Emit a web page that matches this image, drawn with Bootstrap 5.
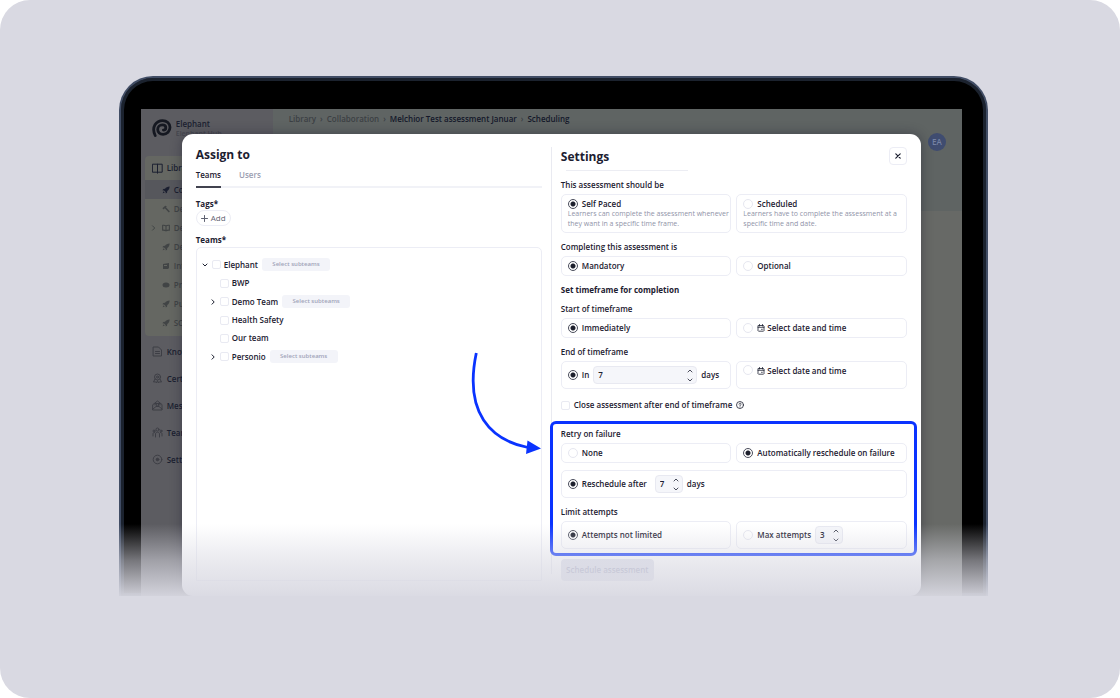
<!DOCTYPE html>
<html lang="en">
<head>
<meta charset="utf-8">
<meta name="viewport" content="width=device-width, initial-scale=1">
<title>Assign to – Scheduling</title>
<link href="https://cdn.jsdelivr.net/npm/bootstrap@5.3.0/dist/css/bootstrap.min.css" rel="stylesheet">
<style>
:root{--stage:#d9d9e2;--ink:#1c2030;--line:#ecedf5;--blue:#0a33ff}
body{font-family:"Open Sans","Noto Sans",sans-serif;font-size:8px;line-height:12px;font-weight:560;color:var(--ink);background:#fff}
button,input{font:inherit;color:inherit}
svg{display:block;flex:none}
.ln{fill:none;stroke:currentColor;stroke-linecap:round;stroke-linejoin:round}
.stage{min-height:100vh;background:var(--stage);border-radius:30px;padding:76px 11.8% 100px 10.6%}
.device{border:2px solid #414d65;border-bottom:0;border-radius:34px 34px 0 0;box-shadow:inset 0 0 0 3px #1b222e;background:#000;padding:31px 24px 0 20px}
.fade-out{left:-3px;right:-3px;bottom:-1px;height:73px;background:linear-gradient(rgba(217,217,226,0),rgba(217,217,226,.55) 50%,rgba(217,217,226,.96));z-index:5}

/* dimmed application behind the dialog */
.app{background:#676966;color:#1b1f30}
.side{width:132px;background:#5c5c61}
.topbar{height:102px;background:#5f6463;padding:4px 16px;color:#3c4044}
.topbar .here{color:#14182a}
.brand{padding:9px 11px 0;height:47px;font-weight:600}
.brand small{font-size:7px;line-height:8px;color:#45464e}
.menu-card{margin:0 0 0 4px;background:#656762;border-radius:4px 0 0 4px;height:180px}
.menu-head{height:24px;padding-left:7px;font-weight:600}
.menu-sub{height:19px;padding-left:17px;color:#414445}
.menu-sub.on{background:#56575c;color:#1b1f30}
.menu-main{height:27px;padding-left:11px;font-weight:600}
.menu-list{padding-top:2px}
.menu-main svg{color:#3d3e45}
.avatar{width:18px;height:18px;border-radius:50%;background:#3f4c70;color:#7481a3;right:16px;top:24px}

/* dialog */
.dialog{margin:0 41px 25px;top:25px;background:#fff;border-radius:11px;padding:13px 14px 15px;box-shadow:0 0 12px rgba(20,20,40,.4);display:grid;grid-template-columns:minmax(0,1fr) 1px minmax(0,1fr);column-gap:9px}
.divider{background:#e9eaf1;margin-bottom:7px}
h1,h2{font-size:12px;line-height:16px;font-weight:700;margin:0}
h3,.lbl{font-size:8px;line-height:12px;margin:0;font-weight:560;display:block}
h3,.lbl.strong{font-weight:700}
.tabs{border-bottom:2px solid #f1f2f7;height:25px;gap:18px}
.tabs button{border:0;background:none;padding:0 0 2px;color:#9a9db0;margin-bottom:-2px;border-bottom:2px solid transparent;line-height:12px;font-weight:600}
.tabs button.on{color:var(--ink);border-color:#41434f}
.tags-label{padding-top:10px}
.teams-label{padding:8px 0 1px}
.add{border:1px solid var(--line);border-radius:8px;background:#fff;height:16px;padding:0 4px;color:#5f6272;gap:3px;font-weight:500}
.tree{border:1px solid var(--line);border-radius:5px 5px 0 0;padding:7px 5px}
.tree ul{list-style:none;padding:0 0 0 8px;margin:0}
.node{height:18px}
.node.parent{height:19px}
.node .twist{width:8px;height:12px;border:0;background:none;padding:0;margin-right:2px}
.node label{margin:0 4px 0 3px}
.subt{border:0;border-radius:3px;background:#f3f4f9;color:#a0a3b8;font-size:6px;line-height:13px;height:13px;width:68px;padding:0}
.tick{appearance:none;width:9px;height:9px;border:1px solid #e9eaf2;border-radius:2px;margin:0;background:#fff;flex:none}
.dot{appearance:none;width:10px;height:10px;border:1px solid #e6e7f0;border-radius:50%;margin:0;background:#fff;flex:none}
.dot:checked{border-color:#4a4d5b;background:radial-gradient(circle,#1d202d 0 2px,#fff 3px)}
.pair{display:grid;grid-template-columns:1fr 1fr;gap:5px}
.opt{border:1px solid var(--line);border-radius:5px;padding:0 6px;min-height:20px;display:flex;align-items:center;gap:4px;background:#fff}
.opt.tall{min-height:28px}
.opt.top-line{align-items:flex-start;padding-top:3px}
.opt.rich{display:block;height:39px;padding:3px 6px}
.opt p{font-size:7px;line-height:10px;color:#9093a8;font-weight:400;margin:-1px -6px 0 0}
.sect{padding-top:8px}
.sect.near{padding-top:7px}
.sect>.lbl{margin-bottom:3px}
.close-row{padding-top:10px}
.close-btn{width:18px;height:18px;border:1px solid var(--line);border-radius:4px;background:#fff;padding:0}
.short-rule{width:122px;margin:5px 0 0 5px;height:1px;background:#ecedf3}
.dated{gap:2px}
.num{height:18px;border:1px solid #e8e9f1;border-radius:4px;background:#f5f6fa;display:flex;align-items:center;padding:0 3px 0 4px;width:28px}
.num.wide{width:104px}
.num input{appearance:textfield;border:0;background:none;padding:0;width:0;flex:1;outline:0;height:12px;margin-bottom:1px}
.num input::-webkit-inner-spin-button{appearance:none}
.num button{display:block;border:0;background:none;padding:0;width:6px;height:6px;color:#4b4e5c}
.num button+button{margin-top:3px}
.callout-box{border:3px solid var(--blue);border-radius:6px;margin:10px -10px 0 -11px;padding:4px 7px 4px 8px}
.callout-box .lbl{margin-bottom:3px}
.reschedule{margin-top:7px}
.send{height:22px;width:93px;border:0;border-radius:4px;background:#dfe1ec;color:#a9acc4;padding:0;font-weight:600;margin-top:3px}
.pointer{right:0;top:203px;color:var(--blue);z-index:3}
</style>
</head>
<body>
<svg class="d-none" aria-hidden="true">
<symbol id="rocket" viewBox="0 0 10 10"><path fill="currentColor" d="M9.500.5C6.700.6 5 1.600 3.800 3.400L1.700 3.700.5 5.300l2 .2 2 2 .2 2L6.300 8.300l.3-2.100C8.400 5 9.400 3.300 9.500.5zM2 6.500.8 9.200l2.700-1.200z"/></symbol>
<symbol id="hammer" viewBox="0 0 10 10"><path fill="currentColor" d="M.5 4 4 .8l2 .7-1 1.200L9.800 8.200 8.500 9.500 3.500 4.200l-1.300 1.300z"/></symbol>
<symbol id="book" viewBox="0 0 10 10"><path class="ln" stroke-width="1.400" d="M5 2.500v6M5 2.500C4 1.700 2.500 1.500.8 1.700v6C2.500 7.600 4 7.700 5 8.500c1-.8 2.500-.9 4.200-.8v-6C7.500 1.500 6 1.700 5 2.500z"/></symbol>
<symbol id="up" viewBox="0 0 6 6"><path class="ln" d="M1 4l2-2 2 2"/></symbol>
<symbol id="down" viewBox="0 0 6 6"><path class="ln" d="M1 2l2 2 2-2"/></symbol>
<symbol id="right" viewBox="0 0 6 6"><path class="ln" d="M2 .8 4.200 3 2 5.200"/></symbol>
<symbol id="cal" viewBox="0 0 8 8"><path class="ln" stroke-width=".8" d="M1.500 1.500h5l.5.500v4.700l-.5.500h-5L1 6.700V2zM1 3.300h6M2.500.5v1.500M5.500.5v1.500M4.500 5.300h.8"/></symbol>
</svg>

<main class="stage">
<div class="device position-relative">
<div class="position-relative overflow-hidden">

<div class="app d-flex position-absolute top-0 start-0 w-100 h-100 overflow-hidden">
  <nav class="side flex-shrink-0" aria-label="Main">
    <div class="brand d-flex gap-1">
      <svg width="20" height="20" viewBox="0 0 20 20" class="ln" style="color:#151821"><path stroke-width="2.800" d="M3.200 17.500C1.500 14 1.200 9.800 3 6.800 4.700 4 7.600 2.600 10.600 2.600c4.200 0 7.400 2.800 7.400 6.700s-2.900 7-6.900 7c-3.300 0-5.400-2-5.400-4.700 0-2.800 2-4.700 4.500-4.700 2.100 0 3.600 1.200 3.600 2.800s-1.100 2.400-2.400 2.400"/></svg>
      <div><div>Elephant</div><small class="d-block">Elephant Hub</small></div>
    </div>
    <div class="menu-card">
      <div class="menu-head d-flex align-items-center gap-1"><svg width="11" height="11" viewBox="0 0 11 11" class="ln"><path d="M.8 1.200h9.400v8H.8zM5.500 1.200v9"/></svg>Library</div>
      <div class="menu-sub on d-flex align-items-center gap-1"><svg width="8" height="8"><use href="#rocket"/></svg>Co</div>
      <div class="menu-sub d-flex align-items-center gap-1"><svg width="8" height="8"><use href="#hammer"/></svg>De</div>
      <div class="menu-sub d-flex align-items-center gap-1 ps-1"><svg width="9" height="6"><use href="#right"/></svg><svg width="8" height="8"><use href="#book"/></svg>De</div>
      <div class="menu-sub d-flex align-items-center gap-1"><svg width="8" height="8"><use href="#rocket"/></svg>De</div>
      <div class="menu-sub d-flex align-items-center gap-1"><svg width="8" height="8" viewBox="0 0 8 8"><path fill="currentColor" d="M1 2 7 1v5L6 7H1zM2 3v1h3V3z" fill-rule="evenodd"/></svg>Int</div>
      <div class="menu-sub d-flex align-items-center gap-1"><svg width="8" height="8" viewBox="0 0 8 8"><ellipse cx="4" cy="4" rx="3.500" ry="2.500" fill="currentColor"/></svg>Pr</div>
      <div class="menu-sub d-flex align-items-center gap-1"><svg width="8" height="8"><use href="#rocket"/></svg>Pu</div>
      <div class="menu-sub d-flex align-items-center gap-1"><svg width="8" height="8"><use href="#rocket"/></svg>SC</div>
    </div>
    <div class="menu-list">
      <div class="menu-main d-flex align-items-center gap-1"><svg width="11" height="11" viewBox="0 0 11 11" class="ln"><path d="M1.500 1h5L9.500 4v6h-8zM3.500 5.500h4M3.500 7.500h4"/></svg>Knowledge</div>
      <div class="menu-main d-flex align-items-center gap-1"><svg width="11" height="11" viewBox="0 0 11 11" class="ln"><circle cx="5.500" cy="4" r="3"/><circle cx="5.500" cy="4" r="1"/><path d="M3 6 1.500 9l2-.2L4.500 10l1-2.500 1 2.500 1-1.200 2 .2L8 6"/></svg>Certificates</div>
      <div class="menu-main d-flex align-items-center gap-1"><svg width="11" height="11" viewBox="0 0 11 11" class="ln"><path d="M1 4.500 5.500 1 10 4.500V10H1zM1 9l3-2.500h3L10 9M3 5V3.500h5V5"/><circle cx="5.500" cy="4.800" r="1.200"/></svg>Messages</div>
      <div class="menu-main d-flex align-items-center gap-1"><svg width="11" height="11" viewBox="0 0 11 11" class="ln"><circle cx="5.500" cy="2.500" r="1.500"/><circle cx="2" cy="4" r="1"/><circle cx="9" cy="4" r="1"/><path d="M3.500 10V7c0-2.500 4-2.500 4 0v3M1 9V7c0-1 .5-1.500 1.500-1.500M10 9V7c0-1-.5-1.500-1.500-1.500"/></svg>Teams</div>
      <div class="menu-main d-flex align-items-center gap-1"><svg width="11" height="11" viewBox="0 0 11 11" class="ln"><circle cx="5.500" cy="5.500" r="4.300"/><circle cx="5.500" cy="5.500" r="1.300" fill="currentColor"/></svg>Settings</div>
    </div>
  </nav>
  <div class="flex-grow-1">
    <div class="topbar d-flex gap-1"><span>Library</span><span>›</span><span>Collaboration</span><span>›</span><span class="here">Melchior Test assessment Januar</span><span>›</span><span class="here">Scheduling</span></div>
    <span class="avatar position-absolute d-flex align-items-center justify-content-center">EA</span>
  </div>
</div>

<section class="dialog position-relative" role="dialog" aria-label="Assign to">
  <div class="position-relative d-flex flex-column">
    <h1>Assign to</h1>
    <div class="tabs d-flex align-items-end"><button class="on h-100">Teams</button><button class="h-100">Users</button></div>
    <div class="lbl strong tags-label">Tags*</div>
    <div><button class="add d-flex align-items-center"><svg width="7" height="7" viewBox="0 0 7 7" class="ln"><path d="M3.500.5v6M.5 3.500h6"/></svg>Add</button></div>
    <div class="lbl strong teams-label">Teams*</div>
    <div class="tree flex-grow-1">
      <div class="node parent d-flex align-items-center"><button class="twist" aria-label="Collapse"><svg width="6" height="6"><use href="#down"/></svg></button><input class="tick" type="checkbox" id="t1"><label for="t1">Elephant</label><button class="subt">Select subteams</button></div>
      <ul>
        <li class="node d-flex align-items-center"><span class="twist"></span><input class="tick" type="checkbox" id="t2"><label for="t2">BWP</label></li>
        <li class="node parent d-flex align-items-center"><button class="twist" aria-label="Expand"><svg width="6" height="6"><use href="#right"/></svg></button><input class="tick" type="checkbox" id="t3"><label for="t3">Demo Team</label><button class="subt">Select subteams</button></li>
        <li class="node d-flex align-items-center"><span class="twist"></span><input class="tick" type="checkbox" id="t4"><label for="t4">Health Safety</label></li>
        <li class="node d-flex align-items-center"><span class="twist"></span><input class="tick" type="checkbox" id="t5"><label for="t5">Our team</label></li>
        <li class="node parent d-flex align-items-center"><button class="twist" aria-label="Expand"><svg width="6" height="6"><use href="#right"/></svg></button><input class="tick" type="checkbox" id="t6"><label for="t6">Personio</label><button class="subt">Select subteams</button></li>
      </ul>
    </div>
    <svg class="pointer position-absolute" width="74" height="106" viewBox="0 0 74 106"><path d="M8.300 3C3.500 26 2.500 50 15.500 70 26 86 42 94 60 97.500" fill="none" stroke="currentColor" stroke-width="2.800"/><path fill="currentColor" d="M59.500 90.500 73 98.500 58 104z"/></svg>
  </div>

  <div class="divider"></div>

  <form onsubmit="return false">
    <div class="d-flex justify-content-between align-items-end"><h2>Settings</h2><button class="close-btn d-flex align-items-center justify-content-center" type="button" aria-label="Close"><svg width="6" height="6" viewBox="0 0 6 6" class="ln"><path stroke-width="1.200" d="M.8.8l4.400 4.400M5.200.8.8 5.200"/></svg></button></div>
    <div class="short-rule"></div>

    <div class="sect"><span class="lbl">This assessment should be</span>
      <div class="pair">
        <div class="opt rich"><label class="d-flex align-items-center gap-1"><input class="dot" type="radio" name="pace" checked>Self Paced</label><p>Learners can complete the assessment whenever they want in a specific time frame.</p></div>
        <div class="opt rich"><label class="d-flex align-items-center gap-1"><input class="dot" type="radio" name="pace">Scheduled</label><p>Learners have to complete the assessment at a specific time and date.</p></div>
      </div>
    </div>
    <div class="sect"><span class="lbl">Completing this assessment is</span>
      <div class="pair">
        <label class="opt"><input class="dot" type="radio" name="must" checked>Mandatory</label>
        <label class="opt"><input class="dot" type="radio" name="must">Optional</label>
      </div>
    </div>
    <h3 class="sect">Set timeframe for completion</h3>
    <div class="sect near"><span class="lbl">Start of timeframe</span>
      <div class="pair">
        <label class="opt"><input class="dot" type="radio" name="start" checked>Immediately</label>
        <label class="opt"><input class="dot" type="radio" name="start"><span class="dated d-flex align-items-center"><svg width="8" height="8"><use href="#cal"/></svg>Select date and time</span></label>
      </div>
    </div>
    <div class="sect"><span class="lbl">End of timeframe</span>
      <div class="pair">
        <div class="opt tall"><input class="dot" type="radio" name="end" id="e1" checked><label for="e1">In</label><div class="num wide"><input type="number" value="7" aria-label="Days until end"><div><button type="button" aria-label="More"><svg width="6" height="6"><use href="#up"/></svg></button><button type="button" aria-label="Less"><svg width="6" height="6"><use href="#down"/></svg></button></div></div><span>days</span></div>
        <label class="opt tall top-line"><input class="dot" type="radio" name="end"><span class="dated d-flex align-items-center"><svg width="8" height="8"><use href="#cal"/></svg>Select date and time</span></label>
      </div>
    </div>
    <label class="d-flex align-items-center gap-1 close-row"><input class="tick" type="checkbox">Close assessment after end of timeframe<svg width="8" height="8" viewBox="0 0 8 8" class="ln"><circle cx="4" cy="4" r="3.500" stroke-width=".8"/><path stroke-width=".8" d="M3 3.200c0-1.400 2.200-1.300 2.100 0C5 3.900 4 3.900 4 4.700M4 5.900v.1"/></svg></label>

    <div class="callout-box">
      <span class="lbl">Retry on failure</span>
      <div class="pair">
        <label class="opt"><input class="dot" type="radio" name="retry">None</label>
        <label class="opt"><input class="dot" type="radio" name="retry" checked>Automatically reschedule on failure</label>
      </div>
      <div class="opt tall reschedule"><input class="dot" type="radio" name="after" id="r1" checked><label for="r1" class="me-1">Reschedule after</label><div class="num"><input type="number" value="7" aria-label="Days before retry"><div><button type="button" aria-label="More"><svg width="6" height="6"><use href="#up"/></svg></button><button type="button" aria-label="Less"><svg width="6" height="6"><use href="#down"/></svg></button></div></div><span>days</span></div>
      <span class="lbl mt-2">Limit attempts</span>
      <div class="pair">
        <label class="opt tall"><input class="dot" type="radio" name="limit" checked>Attempts not limited</label>
        <div class="opt tall"><input class="dot" type="radio" name="limit" id="l2"><label for="l2">Max attempts</label><div class="num"><input type="number" value="3" aria-label="Maximum attempts"><div><button type="button" aria-label="More"><svg width="6" height="6"><use href="#up"/></svg></button><button type="button" aria-label="Less"><svg width="6" height="6"><use href="#down"/></svg></button></div></div></div>
      </div>
    </div>
    <button class="send" type="submit">Schedule assessment</button>
  </form>
</section>

</div>
<div class="fade-out position-absolute"></div>
</div>
</main>
<script src="https://cdn.jsdelivr.net/npm/bootstrap@5.3.0/dist/js/bootstrap.bundle.min.js"></script>
</body>
</html>
